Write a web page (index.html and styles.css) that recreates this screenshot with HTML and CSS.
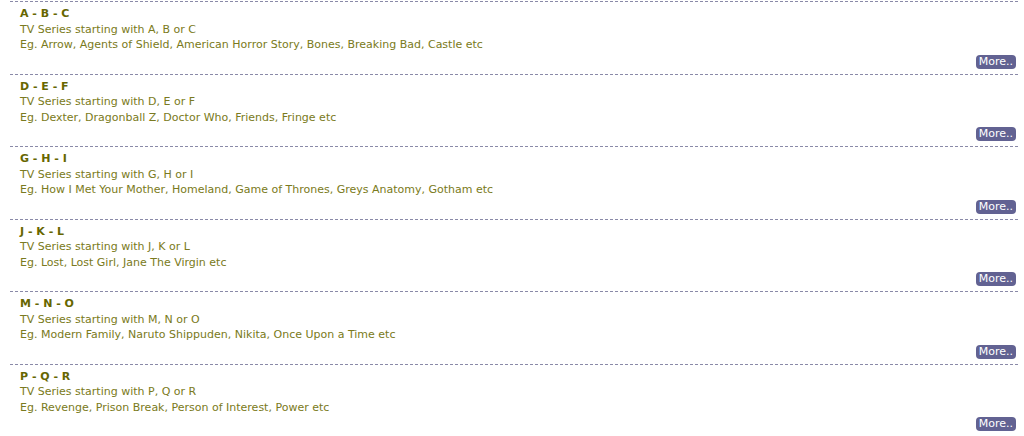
FILE: index.html
```html
<!DOCTYPE html>
<html lang="en">
<head>
    <meta charset="UTF-8">
    <meta name="viewport" content="width=device-width, initial-scale=1.0">
    <title>TV Series</title>
    <link rel="stylesheet" href="styles.css">
</head>
<body>
    <div id="series-list">
        <div class="group">
            <div class="title">A - B - C</div>
            <div class="desc">TV Series starting with A, B or C</div>
            <div class="desc">Eg. Arrow, Agents of Shield, American Horror Story, Bones, Breaking Bad, Castle etc</div>
            <div class="more-row"><a class="more" href="#">More..</a></div>
        </div>
        <div class="group">
            <div class="title">D - E - F</div>
            <div class="desc">TV Series starting with D, E or F</div>
            <div class="desc">Eg. Dexter, Dragonball Z, Doctor Who, Friends, Fringe etc</div>
            <div class="more-row"><a class="more" href="#">More..</a></div>
        </div>
        <div class="group">
            <div class="title">G - H - I</div>
            <div class="desc">TV Series starting with G, H or I</div>
            <div class="desc">Eg. How I Met Your Mother, Homeland, Game of Thrones, Greys Anatomy, Gotham etc</div>
            <div class="more-row"><a class="more" href="#">More..</a></div>
        </div>
        <div class="group">
            <div class="title">J - K - L</div>
            <div class="desc">TV Series starting with J, K or L</div>
            <div class="desc">Eg. Lost, Lost Girl, Jane The Virgin etc</div>
            <div class="more-row"><a class="more" href="#">More..</a></div>
        </div>
        <div class="group">
            <div class="title">M - N - O</div>
            <div class="desc">TV Series starting with M, N or O</div>
            <div class="desc">Eg. Modern Family, Naruto Shippuden, Nikita, Once Upon a Time etc</div>
            <div class="more-row"><a class="more" href="#">More..</a></div>
        </div>
        <div class="group">
            <div class="title">P - Q - R</div>
            <div class="desc">TV Series starting with P, Q or R</div>
            <div class="desc">Eg. Revenge, Prison Break, Person of Interest, Power etc</div>
            <div class="more-row"><a class="more" href="#">More..</a></div>
        </div>
    </div>
</body>
</html>
```
FILE: styles.css
```css
body {
    font-family: "DejaVu Sans", Verdana, sans-serif;
    font-size: 11px;
    background-color: white;
    margin: 0;
    padding: 0;
}

#series-list {
    margin: 1px 6px 0 10px;
}

.group {
    border-top: 1px dashed #8a8aa8;
    padding: 4px 2px 5.1px 10px;
}

.title {
    color: #666600;
    font-weight: bold;
    line-height: 15.5px;
}

.desc {
    color: #7a7a20;
    line-height: 15.5px;
}

.more-row {
    display: flex;
    justify-content: flex-end;
    margin-top: 2px;
}

.more {
    background-color: #626292;
    color: white;
    text-decoration: none;
    border-radius: 4px;
    padding: 0 3px;
    height: 14px;
    line-height: 14px;
}
```
